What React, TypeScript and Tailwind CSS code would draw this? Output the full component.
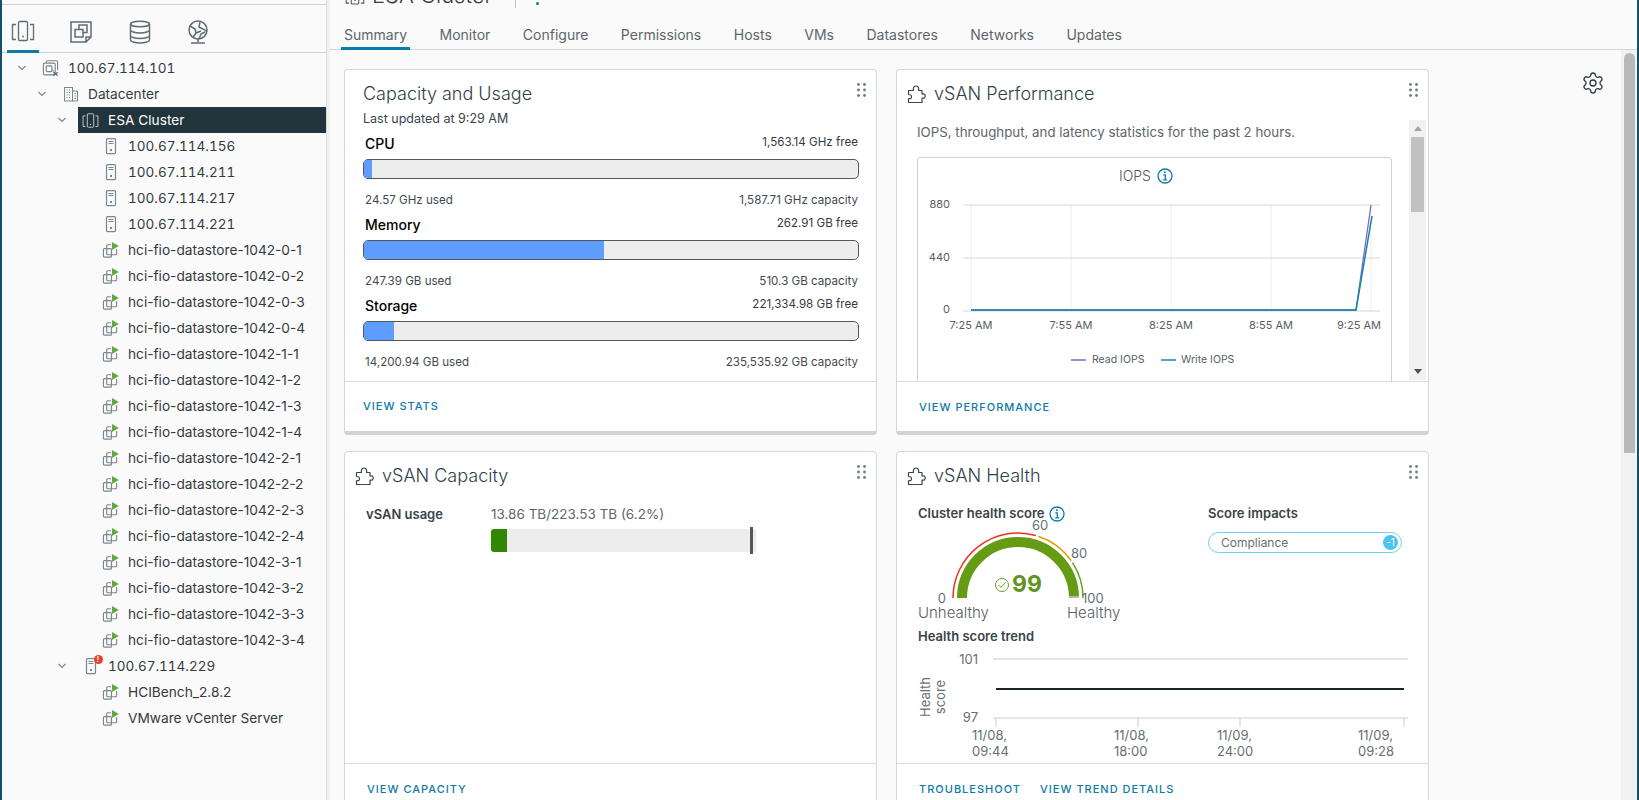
import React from "react";
import { Settings } from "lucide-react";

function ClusterIcon({ size = 22, color = "#5b6b73" }: { size?: number; color?: string }) {
  return (
    <svg width={size} height={size} viewBox="0 0 24 24" fill="none" stroke={color} strokeWidth="1.300">
      <rect x="7.500" y="2.500" width="9" height="19" rx="1.200" />
      <circle cx="12" cy="17.500" r="0.900" fill={color} stroke="none" />
      <path d="M5 5.500H1.500v15H5M19 5.500h3.500v15H19" />
    </svg>
  );
}
function VcIcon() {
  return (
    <svg width="18" height="18" viewBox="0 0 18 18" fill="none" stroke="#7a878e" strokeWidth="1.200">
      <path d="M4.500 3.500V2.500a1.200 1.200 0 0 1 1.200-1.200h9.600a1.200 1.200 0 0 1 1.200 1.200v9" />
      <rect x="1.500" y="3.800" width="12.500" height="12.500" rx="1.500" />
      <rect x="4.500" y="6.800" width="6" height="6" rx="0.800" />
      <path d="M11 11l1.500 1.500" />
      <path d="M12 13.500l4.500 3.500M16.500 13.500l-4.500 3.500" strokeWidth="1.400" stroke="#5a6870" />
    </svg>
  );
}
function DcIcon({ size = 16 }: { size?: number }) {
  return (
    <svg width={size} height={size} viewBox="0 0 16 16" fill="none" stroke="#7a878e" strokeWidth="1">
      <rect x="1.500" y="1.500" width="8" height="13.500" />
      <path d="M9.500 5H14.500V15H9.500" />
      <path d="M3.500 4h1M6 4h1M3.500 6.500h1M6 6.500h1M3.500 9h1M6 9h1M3.500 11.500h1M6 11.500h1M11.500 7.500h1.500M11.500 10h1.500M11.500 12.500h1.500" />
    </svg>
  );
}
function HostIcon({ badge }: { badge?: boolean }) {
  return (
    <span className="relative flex">
      <svg width="18" height="18" viewBox="0 0 18 18" fill="none" stroke="#7a878e" strokeWidth="1.200">
        <rect x="4.500" y="1.600" width="9" height="15" rx="1" />
        <path d="M6.500 4.500h5M6.500 6.500h5" />
        <circle cx="9" cy="13" r="1" fill="#55626a" stroke="none" />
      </svg>
      {badge && (
        <span className="absolute -right-[3px] -top-[2px] flex h-[9px] w-[9px] items-center justify-center rounded-full bg-[#e8402a] text-[7px] leading-none font-bold text-white">
          !
        </span>
      )}
    </span>
  );
}
function VmIcon() {
  return (
    <svg width="18" height="18" viewBox="0 0 18 18" fill="none" stroke="#7a878e" strokeWidth="1.200">
      <path d="M9.500 3.500H6a1 1 0 0 0-1 1v8.500a1 1 0 0 0 1 1h8.500a1 1 0 0 0 1-1V8" />
      <rect x="1.500" y="7.500" width="8.500" height="9" rx="1" />
      <path d="M10.500 0.500L17.800 4.800L10.500 9z" fill="#62a83a" stroke="none" />
    </svg>
  );
}
function Chevron({ color = "#7a878e" }: { color?: string }) {
  return (
    <svg width="10" height="6" viewBox="0 0 10 6" fill="none" stroke={color} strokeWidth="1.200">
      <path d="M1.500 1L5 4.500L8.500 1" />
    </svg>
  );
}
function Puzzle() {
  return (
    <svg width="20" height="20" viewBox="0 0 20 20" fill="none" stroke="#3a474e" strokeWidth="1.200" strokeLinejoin="round">
      <path d="M2.500 18.500V14.800l2.500-.5c.6-.1.6-3.200 0-3.300L2.500 10.500V6.500H7.500C6.700 3.500 8.300 2 10 2s3.300 1.500 2.500 4.500H16V10c2.400-.8 3.200.8 3.200 2s-.8 2.800-3.200 2v4.500z" />
    </svg>
  );
}
function Info({ size = 16 }: { size?: number }) {
  return (
    <svg width={size} height={size} viewBox="0 0 16 16" fill="none" stroke="#0f7aa8" strokeWidth="1.300">
      <circle cx="8" cy="8" r="7" />
      <path d="M6.300 6.800H8.300V11.700M6.200 11.800H10.200" strokeWidth="1.300" />
      <circle cx="7.900" cy="4.300" r="1" fill="#0f7aa8" stroke="none" />
    </svg>
  );
}
function Handle() {
  return (
    <svg className="absolute right-[10px] top-[13px]" width="9" height="14" viewBox="0 0 9 14" fill="#6f7c84">
      <circle cx="1.500" cy="1.500" r="1.400" />
      <circle cx="7.500" cy="1.500" r="1.400" />
      <circle cx="1.500" cy="7" r="1.400" />
      <circle cx="7.500" cy="7" r="1.400" />
      <circle cx="1.500" cy="12.500" r="1.400" />
      <circle cx="7.500" cy="12.500" r="1.400" />
    </svg>
  );
}

const levelPad = ["pl-[12px]", "pl-[32px]", "pl-[52px]", "pl-[72px]"];

type Node = { label: string; level: number; open?: boolean; icon: React.ReactNode; selected?: boolean };
const ds: string[] = [];
for (const a of ["0", "1", "2", "3"]) for (const b of ["1", "2", "3", "4"]) ds.push(`hci-fio-datastore-1042-${a}-${b}`);
const nodes: Node[] = [
  { label: "100.67.114.101", level: 0, open: true, icon: <VcIcon /> },
  { label: "Datacenter", level: 1, open: true, icon: <DcIcon /> },
  { label: "ESA Cluster", level: 2, open: true, selected: true, icon: <ClusterIcon size={17} color="#c9d2d6" /> },
  { label: "100.67.114.156", level: 3, icon: <HostIcon /> },
  { label: "100.67.114.211", level: 3, icon: <HostIcon /> },
  { label: "100.67.114.217", level: 3, icon: <HostIcon /> },
  { label: "100.67.114.221", level: 3, icon: <HostIcon /> },
  ...ds.map((d) => ({ label: d, level: 3, icon: <VmIcon /> })),
  { label: "100.67.114.229", level: 2, open: true, icon: <HostIcon badge /> },
  { label: "HCIBench_2.8.2", level: 3, icon: <VmIcon /> },
  { label: "VMware vCenter Server", level: 3, icon: <VmIcon /> },
];

function Tree() {
  return (
    <div className="pt-[2px]">
      {nodes.map((n) => (
        <div key={n.label} className={`flex h-[26px] items-center ${levelPad[n.level]}`}>
          <span className="flex h-full w-[16px] shrink-0 items-center justify-center">{n.open && <Chevron />}</span>
          <span
            className={`ml-[8px] flex h-full flex-1 items-center gap-[9px] pl-[4px] ${
              n.label.startsWith("100.") ? "text-[13.500px] tabular-nums" : "text-[13.700px]"
            } ${n.selected ? "bg-[#22343c] text-white" : "text-[#333b40]"}`}
          >
            <span className="flex w-[17px] shrink-0 justify-center">{n.icon}</span>
            <span>{n.label}</span>
          </span>
        </div>
      ))}
    </div>
  );
}

function Sidebar() {
  return (
    <aside className="flex h-full w-[325px] shrink-0 flex-col border-r border-[#d8dcdf]">
      <div className="mt-[4px] h-[49px] border-y border-[#ccd3d7]">
        <div className="flex h-full items-start pl-[5px]">
          <div className="flex h-[48px] w-[32px] items-center justify-center border-b-[3px] border-[#0a7cab] pt-[6px]">
            <ClusterIcon size={24} color="#5f6b72" />
          </div>
          <div className="ml-[30px] flex h-[48px] items-center pt-[6px]">
            <svg width="24" height="24" viewBox="0 0 24 24" fill="none" stroke="#5f6b72" strokeWidth="1.500">
              <path d="M2 2h20v15l-5 5H2zM22 17h-5v5" />
              <rect x="10" y="5" width="8" height="7.500" />
              <rect x="6" y="9.500" width="8" height="7.500" fill="#fafafa" />
            </svg>
          </div>
          <div className="ml-[36px] flex h-[48px] items-center pt-[6px]">
            <svg width="22" height="24" viewBox="0 0 22 24" fill="none" stroke="#5f6b72" strokeWidth="1.500">
              <ellipse cx="11" cy="4" rx="9.500" ry="2.800" />
              <path d="M1.500 4v16c0 1.500 4 3 9.500 3s9.500-1.500 9.500-3V4M1.500 10c0 1.500 4 3 9.500 3s9.500-1.500 9.500-3M1.500 15.500c0 1.500 4 3 9.500 3s9.500-1.500 9.500-3" />
            </svg>
          </div>
          <div className="ml-[36px] flex h-[48px] items-center pt-[6px]">
            <svg width="22" height="24" viewBox="0 0 22 24" fill="none" stroke="#5f6b72" strokeWidth="1.500">
              <circle cx="11" cy="10" r="9" />
              <path d="M3 6l5 3 1 4-3 4M13 2l-1 5 6 3 2 2M9 13l5-2M12 19l2-5 4-2" />
              <path d="M11 19v3M4 23h14" />
            </svg>
          </div>
        </div>
      </div>
      <Tree />
    </aside>
  );
}

const tabs = ["Summary", "Monitor", "Configure", "Permissions", "Hosts", "VMs", "Datastores", "Networks", "Updates"];

function Card({ children, thick }: { children: React.ReactNode; thick?: boolean }) {
  return (
    <section
      className={`relative flex flex-col overflow-hidden rounded-[4px] border border-[#cfd8dc] bg-white ${
        thick ? "h-[366px] border-b-[4px] border-b-[#ccd4d9]" : "h-[420px]"
      }`}
    >
      <Handle />
      {children}
    </section>
  );
}

function IconTitle({ title }: { title: string }) {
  return (
    <div className="flex h-[48px] shrink-0 items-center gap-[8px] pb-[1px] pl-[9px] text-[18px] font-light text-[#2f3f48]">
      <Puzzle />
      <span>{title}</span>
    </div>
  );
}

function FootLink({ children, px = "px-[18px]" }: { children: React.ReactNode; px?: string }) {
  return <span className={`${px} text-[11px] font-medium tracking-[1px] text-[#0e7aa6]`}>{children}</span>;
}

function Usage({ name, free, used, cap, fillClass }: { name: string; free: string; used: string; cap: string; fillClass: string }) {
  return (
    <div className="h-[81px]">
      <div className="flex h-[20px] items-center justify-between pb-[2px] pl-[2px] pr-[1px]">
        <span className="text-[14px] font-medium text-black">{name}</span>
        <span className="text-[11.600px] text-[#333b40]">{free}</span>
      </div>
      <div className="mt-[5px] h-[20px] overflow-hidden rounded-[5px] border border-[#565656] bg-[#ededed]">
        <div className={`h-full bg-[#5e9cff] ${fillClass}`} />
      </div>
      <div className="mt-[14px] flex h-[16px] items-center justify-between pl-[2px] pr-[1px] text-[11.600px] text-[#3f4a50]">
        <span>{used}</span>
        <span>{cap}</span>
      </div>
    </div>
  );
}

function CapacityCard() {
  return (
    <Card thick>
      <div className="pl-[18px] pr-[17px] pt-[11px]">
        <div className="text-[18px] leading-[26px] font-light text-[#2f3f48]">Capacity and Usage</div>
        <div className="mt-[4px] text-[12.500px] leading-[16px] text-[#3a4349]">Last updated at 9:29 AM</div>
        <div className="mt-[7px]">
          <Usage name="CPU" free="1,563.14 GHz free" used="24.57 GHz used" cap="1,587.71 GHz capacity" fillClass="w-[1.6%]" />
          <Usage name="Memory" free="262.91 GB free" used="247.39 GB used" cap="510.3 GB capacity" fillClass="w-[48.500%]" />
          <Usage name="Storage" free="221,334.98 GB free" used="14,200.94 GB used" cap="235,535.92 GB capacity" fillClass="w-[6%]" />
        </div>
      </div>
      <div className="mt-auto flex h-[50px] items-center border-t border-[#d5dce0]">
        <FootLink>VIEW STATS</FootLink>
      </div>
    </Card>
  );
}

function IopsChart() {
  const xs = [53, 153, 253, 353, 453];
  const lx = [53, 153, 253, 353, 441];
  const lab = ["7:25 AM", "7:55 AM", "8:25 AM", "8:55 AM", "9:25 AM"];
  return (
    <svg width="473" height="222" viewBox="0 0 473 222" className="block font-['Inter',sans-serif]">
      <text x="201" y="23" fontSize="14" fontWeight="300" fill="#505a60">IOPS</text>
      {xs.map((x) => (
        <line key={x} x1={x} x2={x} y1="47" y2="152" stroke="#eceff0" />
      ))}
      {[47, 100].map((y) => (
        <line key={y} x1="45" x2="462" y1={y} y2={y} stroke="#d3d6d8" />
      ))}
      <line x1="45" x2="462" y1="153" y2="153" stroke="#cfd3d5" />
      {[["880", 47], ["440", 100], ["0", 152]].map(([t, y]) => (
        <text key={t} x="32" y={Number(y) + 3} fontSize="11" textAnchor="end" fill="#565f64">{t}</text>
      ))}
      {lx.map((x, i) => (
        <text key={x} x={x} y="171" fontSize="11" textAnchor="middle" fill="#565f64">{lab[i]}</text>
      ))}
      <path d="M53 152H438L453 47" fill="none" stroke="#7d68c9" strokeWidth="1.300" />
      <path d="M53 152H438L454 58" fill="none" stroke="#1488a8" strokeWidth="1.500" />
      <line x1="153" x2="168" y1="202" y2="202" stroke="#7d68c9" strokeWidth="1.500" />
      <text x="174" y="205" fontSize="10.500" fill="#565f64">Read IOPS</text>
      <line x1="243" x2="258" y1="202" y2="202" stroke="#1488a8" strokeWidth="1.500" />
      <text x="263" y="205" fontSize="10.500" fill="#565f64">Write IOPS</text>
    </svg>
  );
}

function PerformanceCard() {
  return (
    <Card thick>
      <IconTitle title="vSAN Performance" />
      <div className="flex min-h-0 flex-1">
        <div className="w-[512px] overflow-hidden pl-[20px]">
          <div className="mt-[4px] h-[35px] text-[13.300px] leading-[20px] text-[#5d666b]">
            IOPS, throughput, and latency statistics for the past 2 hours.
          </div>
          <div className="relative h-[230px] w-[475px] rounded-t-[3px] border border-[#cdd1d3] bg-white">
            <span className="absolute left-[239px] top-[10px]">
              <Info />
            </span>
            <IopsChart />
          </div>
        </div>
        <div className="mt-[2px] flex h-[260px] w-[17px] flex-col items-center bg-[#f1f1f1]">
          <div className="flex h-[17px] w-full items-center justify-center">
            <span className="h-0 w-0 border-x-[4px] border-b-[5px] border-x-transparent border-b-[#a3a3a3]" />
          </div>
          <div className="h-[75px] w-[13px] bg-[#c1c1c1]" />
          <div className="mt-auto flex h-[17px] w-full items-center justify-center">
            <span className="h-0 w-0 border-x-[4px] border-t-[5px] border-x-transparent border-t-[#505050]" />
          </div>
        </div>
      </div>
      <div className="flex h-[50px] shrink-0 items-center border-t border-[#d5dce0] pt-[1px]">
        <FootLink px="px-[22px]">VIEW PERFORMANCE</FootLink>
      </div>
    </Card>
  );
}

function VsanCapacityCard() {
  return (
    <Card>
      <IconTitle title="vSAN Capacity" />
      <div className="flex h-[263px] shrink-0 pl-[21px] pt-[2px]">
        <span className="w-[125px] text-[13px] leading-[24px] font-semibold text-[#3a4349]">vSAN usage</span>
        <div>
          <div className="text-[13.500px] leading-[24px] text-[#5d666b]">13.86 TB/223.53 TB (6.2%)</div>
          <div className="relative mt-[3px] h-[23px] w-[265px] rounded-l-[3px] bg-[#ededed]">
            <div className="h-full w-[16px] rounded-l-[3px] bg-[#318700]" />
            <span className="absolute -top-[2px] left-[259px] h-[27px] w-[3px] bg-[#565656]" />
          </div>
        </div>
      </div>
      <div className="flex h-[50px] shrink-0 items-center border-t border-[#d5dce0] pt-[2px]">
        <FootLink px="px-[22px]">VIEW CAPACITY</FootLink>
      </div>
    </Card>
  );
}

function polar(r: number, deg: number) {
  const a = (deg * Math.PI) / 180;
  return [100 - r * Math.cos(a), 78 - r * Math.sin(a)];
}
function arc(r: number, a: number, b: number) {
  const [x1, y1] = polar(r, a);
  const [x2, y2] = polar(r, b);
  return `M${x1.toFixed(2)} ${y1.toFixed(2)}A${r} ${r} 0 0 1 ${x2.toFixed(2)} ${y2.toFixed(2)}`;
}

function Gauge() {
  return (
    <svg width="210" height="103" viewBox="0 0 210 103" className="block font-['Inter',sans-serif]">
      <path d={arc(65, 0, 106)} fill="none" stroke="#f52f22" strokeWidth="1.500" />
      <path d={arc(65, 108, 145)} fill="none" stroke="#e3a008" strokeWidth="1.500" />
      <path d={arc(65, 147, 180)} fill="none" stroke="#62a420" strokeWidth="1.500" />
      <path d={arc(56, 0, 180)} fill="none" stroke="#659c14" strokeWidth="10" />
      <rect x="151" y="76" width="10" height="2" fill="#b5b5b5" />
      <text x="28" y="83" fontSize="13" textAnchor="end" fill="#666f75">0</text>
      <text x="114" y="10" fontSize="13" fill="#666f75">60</text>
      <text x="153" y="38" fontSize="13" fill="#666f75">80</text>
      <text x="164" y="83" fontSize="13" fill="#666f75">100</text>
      <circle cx="84" cy="65" r="6.500" fill="none" stroke="#62a420" strokeWidth="1" />
      <path d="M80.500 65l2.500 2.500 4.500-5" fill="none" stroke="#62a420" strokeWidth="1" />
      <text x="94" y="72" fontSize="23" fontWeight="700" fill="#62941e">99</text>
      <text x="0" y="98" fontSize="15" fontWeight="300" fill="#555e64">Unhealthy</text>
      <text x="149" y="98" fontSize="15" fontWeight="300" fill="#555e64">Healthy</text>
    </svg>
  );
}

function Trend() {
  const ticks = [
    [78, "11/08,", "09:44", 57],
    [220, "11/08,", "18:00", 199],
    [322, "11/09,", "24:00", 302],
    [486, "11/09,", "09:28", 443],
  ] as const;
  return (
    <svg width="505" height="112" viewBox="0 0 505 112" className="block font-['Inter',sans-serif]">
      <text transform="translate(12 52) rotate(-90)" textAnchor="middle" fontSize="13" fill="#666f75">Health</text>
      <text transform="translate(27 52) rotate(-90)" textAnchor="middle" fontSize="13" fill="#666f75">score</text>
      <text x="60" y="19" fontSize="13" textAnchor="end" fill="#666f75">101</text>
      <text x="60" y="77" fontSize="13" textAnchor="end" fill="#666f75">97</text>
      <line x1="75" x2="490" y1="14" y2="14" stroke="#c9cdcf" />
      <line x1="75" x2="490" y1="73" y2="73" stroke="#c9cdcf" />
      <line x1="78" x2="486" y1="44" y2="44" stroke="#17242b" strokeWidth="2" />
      {ticks.map(([x, a, b, lx]) => (
        <g key={x}>
          <line x1={x} x2={x} y1="73" y2="82" stroke="#c9cdcf" />
          <text x={lx - 3} y="95" fontSize="13" fill="#666f75">{a}</text>
          <text x={lx - 3} y="111" fontSize="13" fill="#666f75">{b}</text>
        </g>
      ))}
    </svg>
  );
}

function HealthCard() {
  return (
    <Card>
      <IconTitle title="vSAN Health" />
      <div className="h-[263px] shrink-0 overflow-hidden pl-[21px] pt-[5px]">
        <div className="flex">
          <div className="w-[290px]">
            <div className="flex h-[18px] items-center gap-[4px] text-[13px] font-semibold text-[#3a4349]">
              Cluster health score <Info />
            </div>
            <div className="mt-[-3px]">
              <Gauge />
            </div>
          </div>
          <div className="w-[194px]">
            <div className="flex h-[18px] items-center text-[13px] font-semibold text-[#3a4349]">Score impacts</div>
            <div className="mt-[9px] flex h-[21px] items-center justify-between rounded-full border border-[#6bd0f5] pl-[12px] pr-[3px]">
              <span className="text-[12px] text-[#666f75]">Compliance</span>
              <span className="flex h-[15px] w-[15px] items-center justify-center rounded-full bg-[#4fc3f0] text-[10px] text-white">-1</span>
            </div>
          </div>
        </div>
        <div className="mt-[4px] text-[13px] leading-[18px] font-semibold text-[#3a4349]">Health score trend</div>
        <Trend />
      </div>
      <div className="flex h-[50px] shrink-0 items-center gap-[19px] border-t border-[#d5dce0] px-[22px] pt-[2px]">
        <FootLink px="px-0">TROUBLESHOOT</FootLink>
        <FootLink px="px-0">VIEW TREND DETAILS</FootLink>
      </div>
    </Card>
  );
}

export default function App() {
  return (
    <div className="flex h-[800px] w-[1639px] overflow-hidden border-x-2 border-x-[#14506b] bg-[#fafafa] font-['Inter','Liberation_Sans',sans-serif]">
      <Sidebar />
      <div className="w-[3px] shrink-0 bg-[#f1f1f1]" />
      <main className="flex min-w-0 flex-1 flex-col">
        <div className="-mt-[27px] flex h-[45px] shrink-0 items-center pl-[15px] text-[22px] font-light text-[#2f3f48]">
          <ClusterIcon size={20} color="#4a5a63" />
          <span className="ml-[7px]">ESA Cluster</span>
          <span className="ml-[22px] h-[25px] w-px bg-[#b9c1c5]" />
          <span className="ml-[20px] mt-[15px] h-[3px] w-[3px] rounded-full bg-[#0e7aa6]" />
        </div>
        <nav className="flex h-[32px] shrink-0 gap-[32.500px] border-b border-[#cfd6da] pl-[14px] text-[14px] text-[#5d666b]">
          {tabs.map((t, i) => (
            <span
              key={t}
              className={`-mb-px flex h-[32px] items-center ${i === 0 ? "-mx-[3px] border-b-[3px] border-[#0a7cab] px-[3px] pt-[3px]" : ""}`}
            >
              {t}
            </span>
          ))}
        </nav>
        <div className="flex min-h-0 flex-1">
          <div className="flex-1 pl-[14px] pt-[19px]">
            <div className="grid grid-cols-[533px_533px] gap-x-[19px] gap-y-[16px]">
              <CapacityCard />
              <PerformanceCard />
              <VsanCapacityCard />
              <HealthCard />
            </div>
          </div>
          <div className="flex w-[192px] shrink-0 justify-end pr-[16px] pt-[21px]">
            <Settings size={24} strokeWidth={1.300} color="#2b3a42" />
          </div>
          <div className="flex w-[16px] shrink-0 justify-center bg-[#f1f1f1] pt-[3px]">
            <div className="h-[400px] w-[11px] rounded-t-full bg-[#b9b9b9]" />
          </div>
        </div>
      </main>
    </div>
  );
}
